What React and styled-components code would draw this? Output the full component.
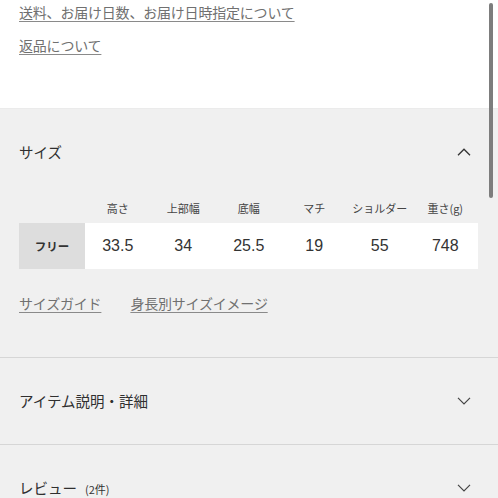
import React from "react";
import styled, { createGlobalStyle } from "styled-components";

const Global = createGlobalStyle`
  html, body { margin: 0; padding: 0; background: #f0f0f0; }
  body {
    font-family: "Liberation Sans", "Noto Sans CJK JP", sans-serif;
    color: #333;
    -webkit-font-smoothing: antialiased;
  }
`;

const Page = styled.div`
  position: relative;
  width: 498px;
  height: 498px;
  overflow: hidden;
  background: #f0f0f0;
`;

const InfoBlock = styled.div`
  background: #fff;
  height: 109px;
  box-sizing: border-box;
  padding: 2px 19px 0;
  display: flex;
  flex-direction: column;
  gap: 12px;
  border-bottom: 1px solid #ebebeb;
`;

const TextLink = styled.a`
  display: inline-block;
  font-family: "Noto Sans CJK JP", sans-serif;
  font-size: 14px;
  line-height: 21px;
  color: #707070;
  text-decoration: underline;
  text-decoration-color: #8a8a8a;
  text-underline-offset: 3px;
  letter-spacing: -0.2px;
`;

const Section = styled.section`
  padding: 0 20px 0 19px;
  border-bottom: ${(p) => (p.$last ? "none" : "1px solid #d6d6d6")};
`;

const Header = styled.div`
  height: 86px;
  display: flex;
  align-items: center;
  justify-content: space-between;
`;

const Title = styled.h3`
  margin: 0;
  font-family: "Noto Sans CJK JP", sans-serif;
  font-weight: 400;
  font-size: 14.5px;
  line-height: 22px;
  color: #2f2f2f;
  display: flex;
  align-items: baseline;
  gap: 8px;
`;

const Count = styled.span`
  font-size: 11px;
  color: #333;
`;

const Chevron = styled.svg`
  width: 14px;
  height: 8px;
  margin-right: 7px;
  flex: none;
`;

const SizeBody = styled.div`
  padding-bottom: 43px;
`;

const Table = styled.div`
  display: grid;
  grid-template-columns: 66px repeat(6, 1fr);
`;

const HeadCell = styled.div`
  height: 26px;
  display: flex;
  align-items: center;
  justify-content: center;
  font-family: "Noto Sans CJK JP", sans-serif;
  font-size: 11px;
  color: #444;
`;

const LabelCell = styled.div`
  height: 46px;
  margin-top: 2px;
  background: #dddddd;
  display: flex;
  align-items: center;
  justify-content: center;
  font-family: "Noto Sans CJK JP", sans-serif;
  font-weight: 700;
  font-size: 11.5px;
  color: #333;
`;

const ValueCell = styled.div`
  height: 46px;
  margin-top: 2px;
  background: #fff;
  display: flex;
  align-items: center;
  justify-content: center;
  font-size: 16px;
  color: #333;
`;

const LinkRow = styled.div`
  display: flex;
  gap: 29px;
  margin-top: 24px;
`;

const Scrollbar = styled.div`
  position: absolute;
  top: 3px;
  left: 489px;
  width: 3.5px;
  height: 195px;
  border-radius: 2px;
  background: #7d7d7d;
`;

const Up = () => (
  <Chevron viewBox="0 0 14 8">
    <path d="M1 7.2 L7 1.2 L13 7.2" fill="none" stroke="#333" strokeWidth="1.3" />
  </Chevron>
);

const Down = () => (
  <Chevron viewBox="0 0 14 8">
    <path d="M1 0.8 L7 6.8 L13 0.8" fill="none" stroke="#444" strokeWidth="1.2" />
  </Chevron>
);

const heads = ["高さ", "上部幅", "底幅", "マチ", "ショルダー", "重さ(g)"];
const values = ["33.5", "34", "25.5", "19", "55", "748"];

export default function App() {
  return (
    <Page>
      <Global />
      <InfoBlock>
        <div><TextLink>送料、お届け日数、お届け日時指定について</TextLink></div>
        <div><TextLink>返品について</TextLink></div>
      </InfoBlock>

      <Section>
        <Header>
          <Title>サイズ</Title>
          <Up />
        </Header>
        <SizeBody>
          <Table>
            <HeadCell />
            {heads.map((h) => (
              <HeadCell key={h}>{h}</HeadCell>
            ))}
            <LabelCell>フリー</LabelCell>
            {values.map((v, i) => (
              <ValueCell key={i}>{v}</ValueCell>
            ))}
          </Table>
          <LinkRow>
            <TextLink>サイズガイド</TextLink>
            <TextLink>身長別サイズイメージ</TextLink>
          </LinkRow>
        </SizeBody>
      </Section>

      <Section>
        <Header>
          <Title>アイテム説明・詳細</Title>
          <Down />
        </Header>
      </Section>

      <Section $last>
        <Header>
          <Title>
            レビュー<Count>(2件)</Count>
          </Title>
          <Down />
        </Header>
      </Section>

      <Scrollbar />
    </Page>
  );
}
